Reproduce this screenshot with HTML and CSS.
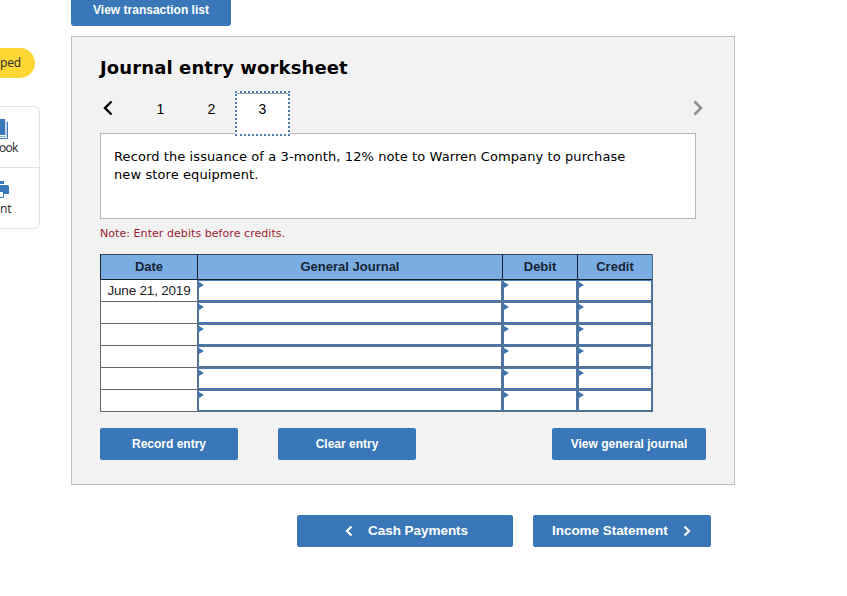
FILE: index.html
```html
<!DOCTYPE html>
<html lang="en">
<head>
<meta charset="utf-8">
<title>Journal entry worksheet</title>
<link rel="stylesheet" href="styles.css">
</head>
<body>
<div class="page">
  <aside class="side">
    <div class="pill">ped</div>
    <div class="tools">
      <div class="tool">
        <svg class="tool-icon" width="24" height="22" viewBox="0 0 24 22"><path fill="#3a77b8" d="M0 0h21v16H0z"/><path fill="none" stroke="#3a77b8" d="M23.500 3v16.500H0"/><path fill="none" stroke="#8fb2d8" d="M22 2v15.500H0"/></svg>
        <span class="book">ook</span>
      </div>
      <div class="tool">
        <svg class="tool-icon print" width="24" height="20" viewBox="0 0 24 20"><path fill="#3a77b8" d="M5 0h14v3H5zM0 4h22q2 0 2 2v7H0z"/><path fill="#fff" stroke="#3a77b8" d="M5 10.500h13.500v6H5z"/></svg>
        <span class="print-label">nt</span>
      </div>
    </div>
  </aside>
  <main class="main">
    <button class="btn transactions">View transaction list</button>
    <section class="panel">
      <h1>Journal entry worksheet</h1>
      <nav class="tabs">
        <svg class="prev" width="10" height="16" viewBox="0 0 10 16"><path d="M8.500 1.500L2 8l6.500 6.500" fill="none" stroke="#000" stroke-width="2.400"/></svg>
        <span class="tab one">1</span>
        <span class="tab two">2</span>
        <span class="tab active">3</span>
        <svg class="next" width="11" height="16" viewBox="0 0 11 16"><path d="M1.500 1.500L8 8l-6.500 6.500" fill="none" stroke="#8f8f8f" stroke-width="2.600"/></svg>
      </nav>
      <div class="question">Record the issuance of a 3-month, 12% note to Warren Company to purchase<br>new store equipment.</div>
      <p class="note">Note: Enter debits before credits.</p>
      <div class="grid">
        <div class="head">Date</div><div class="head">General Journal</div><div class="head">Debit</div><div class="head">Credit</div>
        <div class="date">June 21, 2019</div><div class="entry"></div><div class="entry"></div><div class="entry"></div>
        <div class="date"></div><div class="entry"></div><div class="entry"></div><div class="entry"></div>
        <div class="date"></div><div class="entry"></div><div class="entry"></div><div class="entry"></div>
        <div class="date"></div><div class="entry"></div><div class="entry"></div><div class="entry"></div>
        <div class="date"></div><div class="entry"></div><div class="entry"></div><div class="entry"></div>
        <div class="date"></div><div class="entry"></div><div class="entry"></div><div class="entry"></div>
      </div>
      <div class="actions">
        <button class="btn record">Record entry</button>
        <button class="btn clear">Clear entry</button>
        <button class="btn view">View general journal</button>
      </div>
    </section>
    <div class="pager">
      <button class="btn cash"><svg width="8" height="12" viewBox="0 0 8 12"><path d="M6.500 1.500L2 6l4.500 4.500" fill="none" stroke="#fff" stroke-width="2.200"/></svg><span>Cash Payments</span></button>
      <button class="btn income"><span>Income Statement</span><svg width="8" height="12" viewBox="0 0 8 12"><path d="M1.500 1.500L6 6l-4.500 4.500" fill="none" stroke="#fff" stroke-width="2.200"/></svg></button>
    </div>
  </main>
</div>
</body>
</html>
```
FILE: styles.css
```css
* { box-sizing: border-box; }
body { margin: 0; background: #fff; font-family: "Liberation Sans", Arial, sans-serif; color: #000; }
.page { display: flex; width: 847px; height: 596px; overflow: hidden; }

.side { width: 40px; padding-top: 48px; flex: none; overflow: hidden; font: 12px/16px "Noto Sans", sans-serif; letter-spacing: -.2px; color: #333; }
.pill { display: flex; align-items: center; width: 35px; height: 30px; border-radius: 0 15px 15px 0; background: #fdd835; }
.tools { width: 40px; height: 123px; margin-top: 28px; border: 1px solid #e4e4e4; border-left: 0; border-radius: 0 6px 6px 0; }
.tool { display: flex; flex-direction: column; align-items: flex-start; height: 60px; padding-top: 12px; }
.tool + .tool { border-top: 1px solid #e4e4e4; height: 61px; }
.tool-icon { flex: none; margin-left: -16px; margin-bottom: -1px; }
.tool-icon.print { margin: 1px 0 0 -15px; }
.book { margin-left: -1px; letter-spacing: -.8px; }
.print-label { margin-left: 0; }

.main { margin-left: 31px; width: 664px; flex: none; }
.btn { display: block; height: 32px; margin: 0; padding: 0; border: 0; border-radius: 2px; background: #3a77b8; color: #fff; font: bold 12px/32px "Liberation Sans", Arial, sans-serif; text-align: center; white-space: nowrap; }
.transactions { width: 160px; height: 26px; padding-bottom: 6px; line-height: 20px; border-radius: 0 0 3px 3px; }
.panel { height: 449px; margin-top: 10px; padding: 20px 28px 0; border: 1px solid #bfbfbf; background: #f2f2f2; }
h1 { margin: 0; height: 21px; font: bold 18px/22px "DejaVu Sans", Verdana, sans-serif; letter-spacing: .12px; white-space: nowrap; }
.tabs { display: flex; height: 55px; padding-top: 13px; font-size: 14px; }
.prev { margin: 9px 0 0 3px; }
.tab { line-height: 36px; text-align: center; }
.one { width: 51px; margin-left: 22px; }
.two { width: 51px; }
.active { position: relative; width: 55px; height: 45px; margin-left: -2px; border: 2px dotted #4678b4; background: #fff; line-height: 33px; box-shadow: inset 0 1px #93a3b5; }
.next { margin: 9px 2px 0 auto; }
.question { width: 596px; height: 86px; padding: 14px 13px; border: 1px solid #b5b5b5; background: #fff; font: 13px/18px "DejaVu Sans", Verdana, sans-serif; letter-spacing: .095px; white-space: nowrap; }
.note { margin: 8px 0 0; height: 14px; font: 11px/14px "DejaVu Sans", Verdana, sans-serif; letter-spacing: .06px; color: #9b1c31; }
.grid { display: grid; width: 553px; margin-top: 13px; grid-template-columns: 97px 305px 75px 75px; grid-template-rows: 25px repeat(6, 22px); border-right: 1px solid #4e6e91; border-bottom: 1px solid #5d6a78; }
.head { border-top: 1px solid #33485f; border-left: 1px solid #14202c; background: #7aade2; font: bold 13px/24px "Liberation Sans", Arial, sans-serif; text-align: center; color: #172536; }
.date { border-top: 1px solid #666; border-left: 1px solid #666; background: #fff; font-size: 13.4px; letter-spacing: -.15px; line-height: 21px; text-align: center; white-space: nowrap; color: #222; }
.entry { border-top: 1px solid #5d7085; border-left: 1px solid #5d7085; background: #fff; box-shadow: inset 0 0 0 1px #4679b3; padding: 2px 1px; }
.date:nth-child(5), .entry:nth-child(-n+8) { border-top-color: #14202c; }
.entry::before { content: ""; display: block; width: 0; height: 0; border-left: 5px solid #3f75b3; border-top: 3px solid transparent; border-bottom: 3px solid transparent; }
.actions { display: flex; margin-top: 16px; }
.record, .clear { width: 138px; }
.clear { margin-left: 40px; }
.view { width: 154px; margin-left: 136px; flex: none; }
.pager { display: flex; gap: 20px; margin: 30px 0 0 226px; }
.pager .btn { display: flex; align-items: center; font-size: 13.5px; letter-spacing: -.04px; }
.cash { width: 216px; }
.cash svg { margin: 0 15px 0 48px; }
.income { width: 178px; }
.income span { margin-left: 19px; }
.income svg { margin-left: 15px; }
```
